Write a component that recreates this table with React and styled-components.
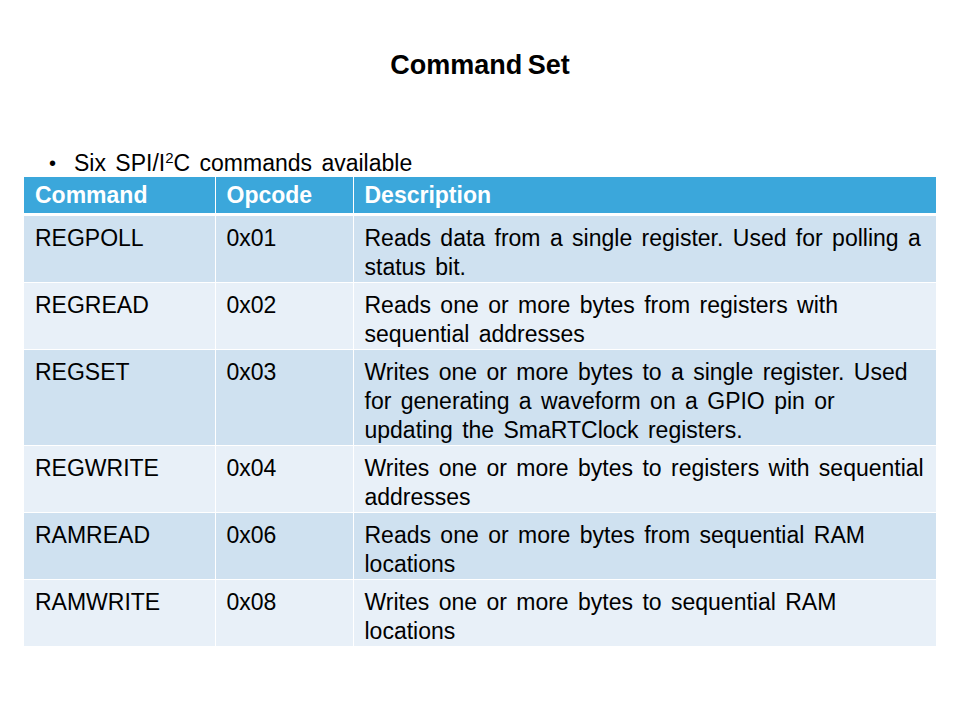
import React from 'react';
import styled, { createGlobalStyle } from 'styled-components';

const rows = [
  ['REGPOLL', '0x01', 'Reads data from a single register. Used for polling a status bit.'],
  ['REGREAD', '0x02', 'Reads one or more bytes from registers with sequential addresses'],
  ['REGSET', '0x03', 'Writes one or more bytes to a single register. Used for generating a waveform on a GPIO pin or updating the SmaRTClock registers.'],
  ['REGWRITE', '0x04', 'Writes one or more bytes to registers with sequential addresses'],
  ['RAMREAD', '0x06', 'Reads one or more bytes from sequential RAM locations'],
  ['RAMWRITE', '0x08', 'Writes one or more bytes to sequential RAM locations'],
];

const App = () => {
  return (
    <Slide>
      <GlobalStyle />
      <Title>Command Set</Title>
      <Bullet>
        <Dot>•</Dot>
        <span>Six SPI/I<Sup>2</Sup>C commands available</span>
      </Bullet>
      <Table>
        <colgroup>
          <col style={{ width: 191 }} />
          <col style={{ width: 138 }} />
          <col />
        </colgroup>
        <thead>
          <tr>
            <Th>Command</Th>
            <Th>Opcode</Th>
            <Th>Description</Th>
          </tr>
        </thead>
        <tbody>
          {rows.map((r, i) => (
            <Row key={r[0]} $odd={i % 2 === 0}>
              <Td>{r[0]}</Td>
              <Td>{r[1]}</Td>
              <Td>{r[2]}</Td>
            </Row>
          ))}
        </tbody>
      </Table>
    </Slide>
  );
};

const GlobalStyle = createGlobalStyle`
  body {
    margin: 0;
    background: #fff;
    font-family: "Liberation Sans", Arial, sans-serif;
    color: #000;
  }
`;

const Slide = styled.div`
  width: 960px;
  height: 720px;
  display: flex;
  flex-direction: column;
  padding: 49px 24px 0 24px;
  box-sizing: border-box;
`;

const Title = styled.h1`
  margin: 0;
  text-align: center;
  font-size: 27px;
  line-height: 32px;
  font-weight: bold;
  word-spacing: -2px;
`;

const Bullet = styled.div`
  display: flex;
  margin-top: 68px;
  padding-left: 25px;
  font-size: 23px;
  line-height: 28px;
  height: 28px;
  word-spacing: 3px;
`;

const Dot = styled.span`
  width: 25px;
  font-size: 20px;
`;

const Sup = styled.sup`
  font-size: 15px;
  line-height: 0;
  vertical-align: 8px;
  word-spacing: 0;
`;

const Table = styled.table`
  width: 912px;
  border-collapse: collapse;
  table-layout: fixed;
  font-size: 23px;
  line-height: 29px;
  word-spacing: 3px;
`;

const Th = styled.th`
  background: #3ba7db;
  color: #fff;
  text-align: left;
  font-weight: bold;
  padding: 4px 11px 3px 11px;
  border-left: 1px solid #fff;
  border-bottom: 3px solid #fff;
  &:first-child { border-left: none; }
`;

const Row = styled.tr`
  background: ${(p) => (p.$odd ? '#cfe1f0' : '#e8f0f8')};
  border-bottom: 1px solid #fff;
`;

const Td = styled.td`
  vertical-align: top;
  padding: 8px 8px 0 11px;
  border-left: 1px solid #fff;
  &:first-child { border-left: none; }
`;

export default App;
